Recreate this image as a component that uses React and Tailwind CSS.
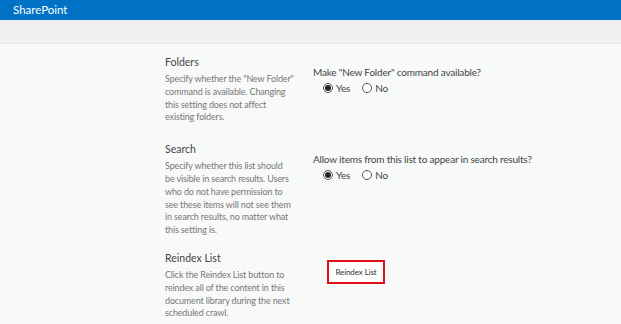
const sections = [
  {
    title: 'Folders',
    lines: ['Specify whether the "New Folder"', 'command is available. Changing', 'this setting does not affect', 'existing folders.'],
    question: 'Make "New Folder" command available?',
    pad: 'pb-[18px]',
  },
  {
    title: 'Search',
    lines: [
      'Specify whether this list should',
      'be visible in search results. Users',
      'who do not have permission to',
      'see these items will not see them',
      'in search results, no matter what',
      'this setting is.',
    ],
    question: 'Allow items from this list to appear in search results?',
    pad: 'pb-[14px]',
  },
];

function Radio({ label, checked }) {
  return (
    <label className="flex items-center gap-[3px]">
      <span className="flex h-[10px] w-[10px] items-center justify-center rounded-full border border-[#555] bg-white">
        {checked && <span className="h-[6px] w-[6px] rounded-full bg-[#222]" />}
      </span>
      <span>{label}</span>
    </label>
  );
}

function Desc({ lines }) {
  return (
    <p className="mt-[4px] whitespace-nowrap text-[9px] leading-[12.8px] tracking-[-0.15px] text-[#777]">
      {lines.map((l) => (
        <span key={l} className="block">
          {l}
        </span>
      ))}
    </p>
  );
}

export default function App() {
  return (
    <div className="h-[324px] w-[621px] overflow-hidden bg-[#f8faf9] font-['Lato',sans-serif]">
      <header className="flex h-[20px] items-center bg-[#0072c6] px-[13px] text-[11.5px] text-white">
        SharePoint
      </header>
      <div className="h-[24px] border-b border-[#e6e8e7] bg-[#f0f0f0]" />

      <main className="pl-[165px] pt-[11px]">
        {sections.map((s) => (
          <section key={s.title} className={`flex ${s.pad}`}>
            <div className="w-[136px]">
              <h3 className="text-[10.5px] leading-[14px] text-[#444]">{s.title}</h3>
              <Desc lines={s.lines} />
            </div>
            <div className="pl-[12px] pt-[10px] text-[10px] leading-[14px] tracking-[-0.2px] text-[#444]">
              <p>{s.question}</p>
              <div className="mt-[2px] flex gap-[12px] pl-[10px]">
                <Radio label="Yes" checked />
                <Radio label="No" />
              </div>
            </div>
          </section>
        ))}

        <section className="flex">
          <div className="w-[136px]">
            <h3 className="text-[10.5px] leading-[14px] text-[#444]">Reindex List</h3>
            <Desc
              lines={[
                'Click the Reindex List button to',
                'reindex all of the content in this',
                'document library during the next',
                'scheduled crawl.',
              ]}
            />
          </div>
          <div className="pl-[26px] pt-[6px]">
            <button
              type="button"
              className="h-[24px] w-[58px] border-2 border-[#e0101a] bg-white text-[8px] tracking-[-0.1px] text-[#333]"
            >
              Reindex List
            </button>
          </div>
        </section>
      </main>
    </div>
  );
}
